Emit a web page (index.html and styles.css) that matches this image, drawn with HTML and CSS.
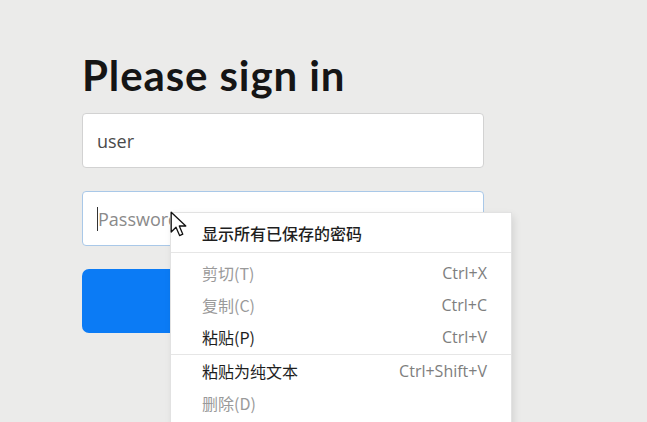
FILE: index.html
```html
<!DOCTYPE html>
<html lang="zh">
<head>
<meta charset="utf-8">
<title>Please sign in</title>
<link rel="stylesheet" href="styles.css">
</head>
<body>
<main class="page">
  <form class="signin">
    <h2 class="title">Please sign in</h2>
    <div class="field">user</div>
    <div class="field focused"><span class="caret"></span><span class="placeholder">Password</span></div>
    <div class="btn"></div>
  </form>
</main>

<div class="menu">
  <div class="item strong top">显示所有已保存的密码</div>
  <div class="sep"></div>
  <div class="item disabled"><span>剪切(T)</span><span class="key">Ctrl+X</span></div>
  <div class="item disabled"><span>复制(C)</span><span class="key">Ctrl+C</span></div>
  <div class="item strong"><span>粘贴(P)</span><span class="key">Ctrl+V</span></div>
  <div class="sep tight"></div>
  <div class="item strong"><span>粘贴为纯文本</span><span class="key">Ctrl+Shift+V</span></div>
  <div class="item disabled"><span>删除(D)</span></div>
</div>

<svg class="cursor" width="18" height="27" viewBox="0 0 18 27">
  <path d="M1.2 1.2 L1.2 21 L6 16.2 L9.6 24.6 L12.8 23.2 L9.3 15 L15.8 15 Z" fill="#fff" stroke="#111" stroke-width="1.3" stroke-linejoin="round"/>
</svg>
</body>
</html>
```
FILE: styles.css
```css
html, body {
  margin: 0;
  padding: 0;
  background: #ebebea;
  height: 100%;
  overflow: hidden;
}
body {
  font-family: "Segoe UI", "Open Sans", "Noto Sans", "Noto Sans CJK SC", sans-serif;
}
.page {
  padding: 51px 0 0 82px;
}
.signin {
  width: 402px;
  display: flex;
  flex-direction: column;
}
.title {
  margin: 0 0 14px 0;
  font-family: Lato, "Open Sans", sans-serif;
  font-weight: 700;
  font-size: 42px;
  line-height: 48px;
  color: #151515;
  letter-spacing: 0.9px;
}
.field {
  box-sizing: border-box;
  height: 55px;
  background: #fff;
  border: 1px solid #d2d2d2;
  border-radius: 4px;
  padding: 0 14px;
  display: flex;
  align-items: center;
  font-size: 18px;
  color: #4a4a4a;
  margin-bottom: 23px;
}
.field.focused {
  border-color: #a9c8e8;
}
.caret {
  width: 1px;
  height: 24px;
  background: #333;
}
.placeholder {
  color: #8a8a8a;
}
.btn {
  height: 64px;
  background: #0b7bf5;
  border-radius: 7px;
}
.menu {
  position: absolute;
  left: 171px;
  top: 213px;
  width: 340px;
  height: 230px;
  background: #fff;
  box-shadow: 0 0 0 1px #e2e2e2, 2px 3px 8px rgba(0,0,0,0.12);
  padding-top: 4px;
  box-sizing: border-box;
  font-family: "Noto Sans CJK SC", "Noto Sans", sans-serif;
}
.item {
  height: 32px;
  display: flex;
  align-items: center;
  justify-content: space-between;
  padding: 0 24px 0 31px;
  font-size: 16px;
  color: #1e1e1e;
}
.item.top {
  font-weight: 500;
}
.item.disabled {
  color: #9a9a9a;
}
.key {
  font-family: "Open Sans", "Noto Sans", sans-serif;
  font-size: 16px;
  color: #7e7e7e;
}
.sep {
  height: 1px;
  background: #e6e6e6;
  margin: 3px 0 4px;
}
.sep.tight {
  margin: 1px 0 0;
}
.cursor {
  position: absolute;
  left: 170px;
  top: 211px;
}
```
